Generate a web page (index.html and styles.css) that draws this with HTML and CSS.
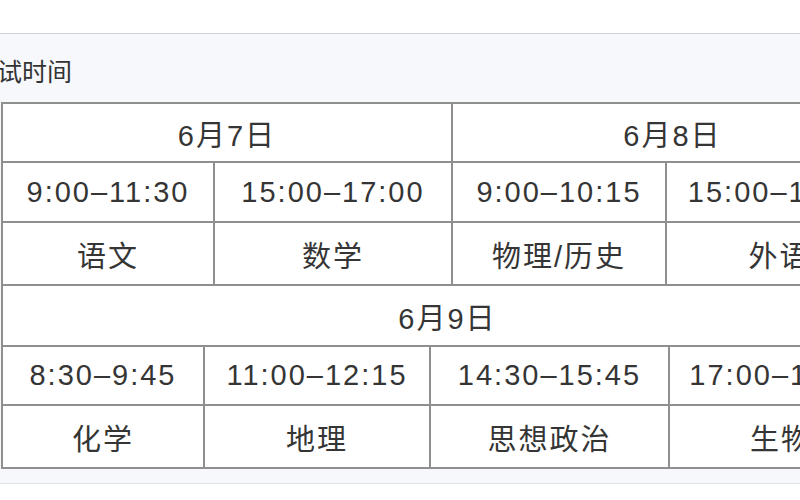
FILE: index.html
```html
<!DOCTYPE html>
<html lang="zh-CN">
<head>
<meta charset="utf-8">
<title>考试时间</title>
<link rel="stylesheet" href="styles.css">
</head>
<body>
<div class="page">
  <section class="panel">
    <h2 class="title">考试时间</h2>
    <div class="grid grid-top">
      <div class="cell span2">6月7日</div>
      <div class="cell span2">6月8日</div>
      <div class="cell">9:00–11:30</div>
      <div class="cell">15:00–17:00</div>
      <div class="cell">9:00–10:15</div>
      <div class="cell">15:00–17:00</div>
      <div class="cell sub">语文</div>
      <div class="cell sub">数学</div>
      <div class="cell sub">物理/历史</div>
      <div class="cell sub">外语</div>
    </div>
    <div class="grid grid-bottom">
      <div class="cell span4">6月9日</div>
      <div class="cell">8:30–9:45</div>
      <div class="cell">11:00–12:15</div>
      <div class="cell">14:30–15:45</div>
      <div class="cell">17:00–18:15</div>
      <div class="cell sub">化学</div>
      <div class="cell sub">地理</div>
      <div class="cell sub">思想政治</div>
      <div class="cell sub">生物</div>
    </div>
  </section>
</div>
</body>
</html>
```
FILE: styles.css
```css
html, body {
  margin: 0;
  padding: 0;
  background: #ffffff;
}
body {
  width: 800px;
  height: 500px;
  overflow: hidden;
  font-family: "Liberation Sans", "Noto Sans CJK SC", sans-serif;
  color: #353535;
}
.page {
  padding-top: 33px;
}
.panel {
  background: #f6f8fb;
  border-top: 1px solid #cfd3d8;
  border-bottom: 1px solid #dfe3e8;
  padding-bottom: 14px;
  width: 1000px;
}
.title {
  margin: 0 0 0 -28px;
  height: 68px;
  padding-top: 4px;
  box-sizing: border-box;
  display: flex;
  align-items: center;
  font-size: 25px;
  font-weight: normal;
  color: #333;
  font-family: "Noto Sans CJK SC", sans-serif;
}
.grid {
  display: grid;
  gap: 2px;
  background: #8f8f8f;
  border: 2px solid #8f8f8f;
  margin-left: 1px;
  width: fit-content;
}
.grid-top {
  grid-template-columns: 210px 236px 212px 225px;
  grid-template-rows: 57px 58px 61px;
}
.grid-bottom {
  border-top: 0;
  grid-template-columns: 200px 224px 237px 222px;
  grid-template-rows: 59px 57px 61px;
}
.cell {
  background: #ffffff;
  display: flex;
  align-items: center;
  justify-content: center;
  font-size: 29px;
  letter-spacing: 2px;
  white-space: nowrap;
}
.span2 {
  grid-column: span 2;
}
.span4 {
  grid-column: span 4;
}
```
